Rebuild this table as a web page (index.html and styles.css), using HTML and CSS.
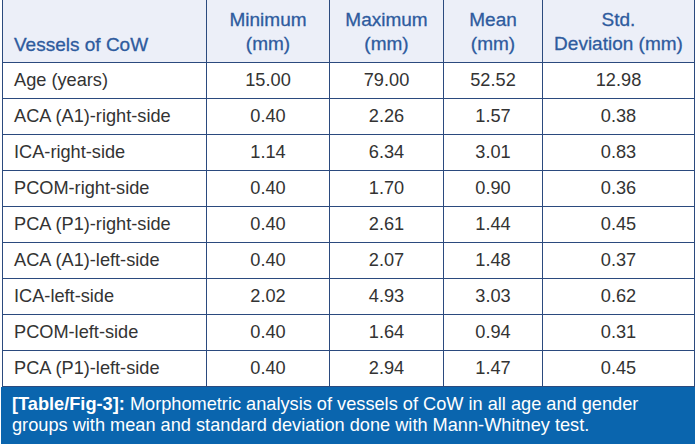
FILE: index.html
```html
<!DOCTYPE html>
<html>
<head>
<meta charset="utf-8">
<link rel="stylesheet" href="styles.css">
</head>
<body>
<div class="figure">
  <table class="data">
    <colgroup>
      <col class="c1"><col class="c2"><col class="c3"><col class="c4"><col class="c5">
    </colgroup>
    <thead>
      <tr>
        <th class="first">Vessels of CoW</th>
        <th>Minimum<br>(mm)</th>
        <th>Maximum<br>(mm)</th>
        <th>Mean<br>(mm)</th>
        <th>Std.<br>Deviation (mm)</th>
      </tr>
    </thead>
    <tbody>
      <tr><td class="first">Age (years)</td><td>15.00</td><td>79.00</td><td>52.52</td><td>12.98</td></tr>
      <tr><td class="first">ACA (A1)-right-side</td><td>0.40</td><td>2.26</td><td>1.57</td><td>0.38</td></tr>
      <tr><td class="first">ICA-right-side</td><td>1.14</td><td>6.34</td><td>3.01</td><td>0.83</td></tr>
      <tr><td class="first">PCOM-right-side</td><td>0.40</td><td>1.70</td><td>0.90</td><td>0.36</td></tr>
      <tr><td class="first">PCA (P1)-right-side</td><td>0.40</td><td>2.61</td><td>1.44</td><td>0.45</td></tr>
      <tr><td class="first">ACA (A1)-left-side</td><td>0.40</td><td>2.07</td><td>1.48</td><td>0.37</td></tr>
      <tr><td class="first">ICA-left-side</td><td>2.02</td><td>4.93</td><td>3.03</td><td>0.62</td></tr>
      <tr><td class="first">PCOM-left-side</td><td>0.40</td><td>1.64</td><td>0.94</td><td>0.31</td></tr>
      <tr><td class="first">PCA (P1)-left-side</td><td>0.40</td><td>2.94</td><td>1.47</td><td>0.45</td></tr>
    </tbody>
  </table>
  <div class="caption"><span class="tag">[Table/Fig-3]:</span> Morphometric analysis of vessels of CoW in all age and gender groups with mean and standard deviation done with Mann-Whitney test.</div>
</div>
</body>
</html>
```

FILE: styles.css
```css
html, body {
  margin: 0;
  padding: 0;
  background: #ffffff;
}
body {
  font-family: "Liberation Sans", Arial, sans-serif;
  width: 697px;
  height: 447px;
  overflow: hidden;
}
.figure {
  padding: 0 2px 0 1px;
  display: flex;
  flex-direction: column;
}
.data {
  border-collapse: collapse;
  table-layout: fixed;
  margin-left: 1px;
  width: 693px;
}
.c1 { width: 204px; }
.c2 { width: 123px; }
.c3 { width: 114px; }
.c4 { width: 99px; }
.c5 { width: 152px; }
.data th, .data td {
  border: 1px solid #2b4a7e;
  text-align: center;
  padding: 0;
}
.data thead tr {
  height: 62px;
}
.data th {
  border-top: none;
  background: #eceff8;
  color: #2e5b9e;
  font-weight: normal;
  font-size: 19px;
  line-height: 24px;
  vertical-align: middle;
  padding-top: 2px;
  -webkit-text-stroke: 0.3px #2e5b9e;
}
.data th.first {
  text-align: left;
  vertical-align: bottom;
  padding: 0 0 5px 11px;
}
.data tbody tr {
  height: 36px;
}
.data td {
  color: #333333;
  font-size: 18.2px;
  line-height: 21px;
}
.data td.first {
  text-align: left;
  padding-left: 11px;
}
.caption {
  background: #0a65ae;
  color: #ffffff;
  font-size: 18.2px;
  line-height: 21px;
  height: 57px;
  box-sizing: border-box;
  padding: 7px 10px 0 11px;
  width: 694px;
}
.tag {
  font-weight: bold;
}
```
